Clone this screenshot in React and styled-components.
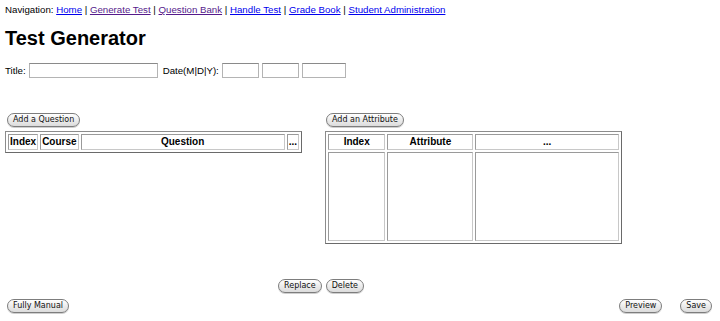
import React from 'react';
import styled, { createGlobalStyle } from 'styled-components';

const GlobalStyle = createGlobalStyle`
  body {
    margin: 0;
    padding: 3px 5px;
    background: #fff;
    color: #000;
    font-family: "Liberation Sans", Arial, sans-serif;
    font-size: 9.7px;
  }
`;

const Nav = styled.div`
  line-height: 14px;
  a { color: #0000ee; }
  a.visited { color: #551a8b; }
`;

const Heading = styled.h1`
  margin: 9px 0 13px;
  font-size: 20px;
  line-height: 24px;
  font-weight: bold;
`;

const FieldRow = styled.div`
  display: flex;
  align-items: center;
  height: 15px;
`;

const Label = styled.span`
  margin-right: 3px;
  margin-left: ${p => p.$gap || 0}px;
`;

const TextInput = styled.input`
  box-sizing: border-box;
  width: ${p => p.$w}px;
  height: 15px;
  margin: 0 3px 0 0;
  padding: 0;
  border: 1px solid #b4b4b4;
  border-top-color: #8a8a8a;
  background: #fff;
`;

const Columns = styled.div`
  display: flex;
  width: 640px;
  margin-top: 35px;
`;

const Column = styled.div`
  width: 320px;
  flex-shrink: 0;
  display: flex;
  flex-direction: column;
  align-items: flex-start;
`;

const Pill = styled.button`
  height: 14px;
  padding: 0 5px;
  margin: 0 0 0 ${p => p.$ml || 0}px;
  border: 1px solid #7d7d7d;
  border-radius: 7px;
  background: linear-gradient(#ffffff, #ececec 50%, #dcdcdc);
  font-family: "DejaVu Sans", sans-serif;
  font-size: 8px;
  line-height: 12px;
  color: #111;
  box-shadow: 0 1px 0 #cfcfcf;
`;

const Grid = styled.table`
  margin-top: 4px;
  width: 297px;
  border: 1px solid #8c8c8c;
  border-right-color: #6a6a6a;
  border-bottom-color: #6a6a6a;
  border-spacing: 2px;
  font-size: 10px;
`;

const Head = styled.th`
  width: ${p => p.$w};
  height: 12px;
  padding: 1px;
  border: 1px solid #9a9a9a;
  border-right-color: #c8c8c8;
  border-bottom-color: #c8c8c8;
  text-align: center;
  font-weight: bold;
  line-height: 12px;
  white-space: nowrap;
`;

const Cell = styled.td`
  height: 85px;
  padding: 1px;
  border: 1px solid #9a9a9a;
  border-right-color: #c8c8c8;
  border-bottom-color: #c8c8c8;
`;

const Center = styled.div`
  width: 632px;
  display: flex;
  justify-content: center;
  gap: 4px;
  margin-top: 35px;
`;

const Footer = styled.div`
  display: flex;
  justify-content: space-between;
  align-items: center;
  margin-top: 6px;
  padding: 0 3px 0 2px;
`;

const Right = styled.div`
  display: flex;
  gap: 18px;
`;

const App = () => (
  <>
    <GlobalStyle />
    <Nav>
      Navigation: <a href="#h">Home</a> | <a className="visited" href="#g">Generate Test</a> |{' '}
      <a className="visited" href="#q">Question Bank</a> | <a href="#t">Handle Test</a> |{' '}
      <a href="#b">Grade Book</a> | <a href="#s">Student Administration</a>
    </Nav>
    <Heading>Test Generator</Heading>
    <FieldRow>
      <Label>Title:</Label>
      <TextInput $w={129} />
      <Label $gap={2}>Date(M|D|Y):</Label>
      <TextInput $w={37} />
      <TextInput $w={37} />
      <TextInput $w={44} />
    </FieldRow>
    <Columns>
      <Column>
        <Pill $ml={2}>Add a Question</Pill>
        <Grid>
          <thead>
            <tr>
              <Head>Index</Head>
              <Head>Course</Head>
              <Head $w="100%">Question</Head>
              <Head>...</Head>
            </tr>
          </thead>
        </Grid>
      </Column>
      <Column>
        <Pill $ml={1}>Add an Attribute</Pill>
        <Grid>
          <thead>
            <tr>
              <Head $w="20%">Index</Head>
              <Head $w="30%">Attribute</Head>
              <Head $w="50%">...</Head>
            </tr>
          </thead>
          <tbody>
            <tr>
              <Cell />
              <Cell />
              <Cell />
            </tr>
          </tbody>
        </Grid>
      </Column>
    </Columns>
    <Center>
      <Pill>Replace</Pill>
      <Pill>Delete</Pill>
    </Center>
    <Footer>
      <Pill>Fully Manual</Pill>
      <Right>
        <Pill>Preview</Pill>
        <Pill>Save</Pill>
      </Right>
    </Footer>
  </>
);

export default App;
